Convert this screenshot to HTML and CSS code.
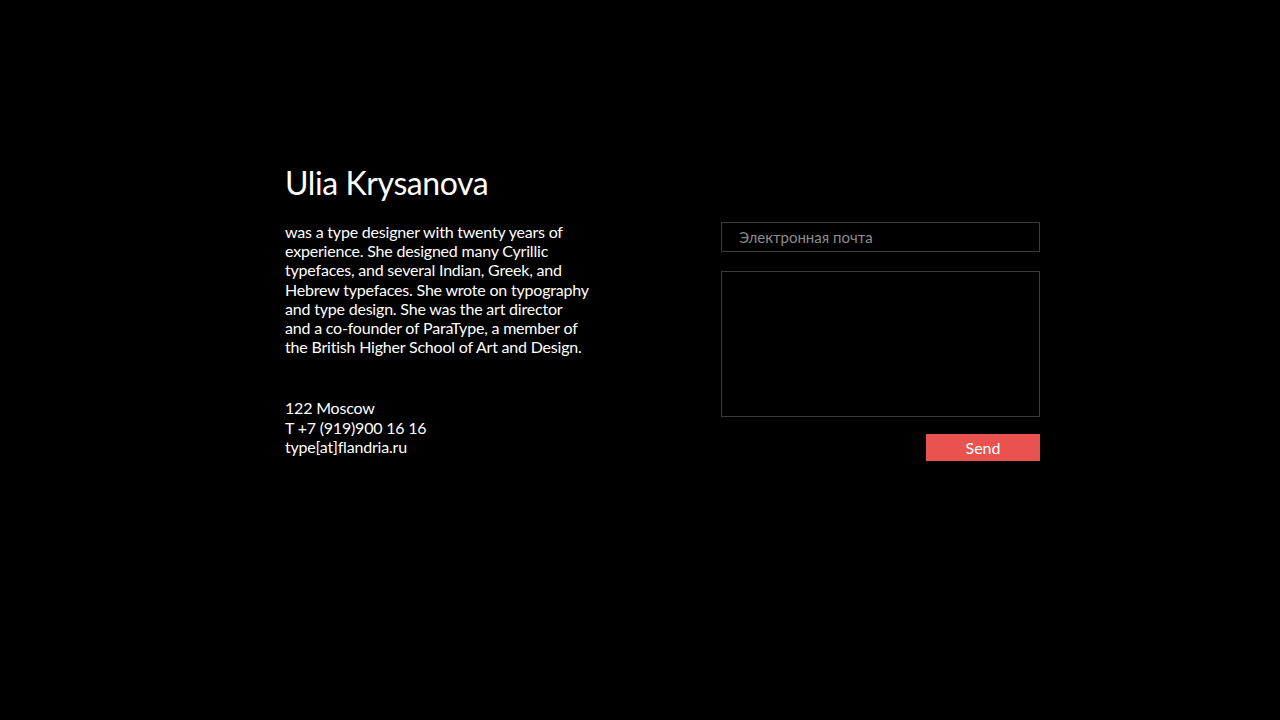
FILE: index.html
```html
<!DOCTYPE html>
<html lang="en">
<head>
<meta charset="utf-8">
<title>Ulia Krysanova</title>
<link rel="stylesheet" href="styles.css">
</head>
<body>
<main class="page">
  <section class="info">
    <h1 class="name">Ulia Krysanova</h1>
    <p class="bio">was a type designer with twenty years of<br>experience. She designed many Cyrillic<br>typefaces, and several Indian, Greek, and<br>Hebrew typefaces. She wrote on typography<br>and type design. She was the art director<br>and a co-founder of ParaType, a member of<br>the British Higher School of Art and Design.</p>
    <p class="contact">122 Moscow<br>T +7 (919)900 16 16<br>type[at]flandria.ru</p>
  </section>
  <form class="form">
    <input class="field" type="text" placeholder="Электронная почта">
    <textarea class="area"></textarea>
    <div class="actions"><button class="send" type="button">Send</button></div>
  </form>
</main>
</body>
</html>
```
FILE: styles.css
```css
html, body {
  margin: 0;
  padding: 0;
  background: #000;
  height: 100%;
}
body {
  font-family: Lato, "Noto Sans", sans-serif;
  color: #fff;
}
.page {
  display: flex;
  gap: 116px;
  padding: 160px 0 0 285px;
}
.info {
  width: 320px;
}
.name {
  margin: 0;
  font-size: 32px;
  font-weight: 400;
  line-height: 46px;
  letter-spacing: -0.4px;
}
.bio {
  margin: 16px 0 0;
  font-size: 16px;
  line-height: 19.2px;
  letter-spacing: -0.2px;
}
.contact {
  margin: 42px 0 0;
  font-size: 16px;
  line-height: 19.5px;
  letter-spacing: -0.2px;
}
.form {
  width: 319px;
  margin-top: 62px;
  display: flex;
  flex-direction: column;
}
.field, .area {
  box-sizing: border-box;
  width: 100%;
  background: #000;
  border: 1px solid #3a3a3a;
  color: #fff;
  font-family: inherit;
  font-size: 15px;
  outline: none;
}
.field {
  height: 30px;
  padding: 0 17px;
}
.field::placeholder {
  color: #8c8c8c;
}
.area {
  height: 146px;
  margin-top: 19px;
  resize: none;
  display: block;
}
.actions {
  display: flex;
  justify-content: flex-end;
  margin-top: 17px;
}
.send {
  width: 114px;
  height: 27px;
  border: 0;
  background: #e9524f;
  color: #fff;
  font-family: inherit;
  font-size: 16px;
  padding: 0;
}
```
